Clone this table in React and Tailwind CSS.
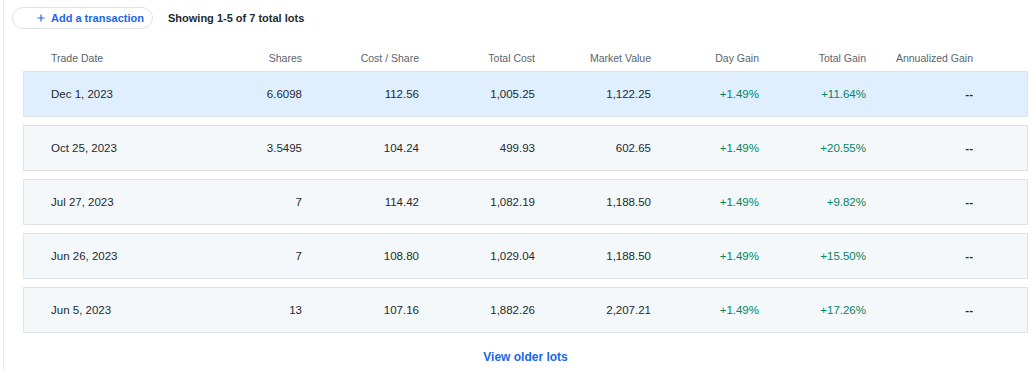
const lots = [
  { date: "Dec 1, 2023", shares: "6.6098", cost: "112.56", total: "1,005.25", value: "1,122.25", day: "+1.49%", gain: "+11.64%", annual: "--", active: true },
  { date: "Oct 25, 2023", shares: "3.5495", cost: "104.24", total: "499.93", value: "602.65", day: "+1.49%", gain: "+20.55%", annual: "--" },
  { date: "Jul 27, 2023", shares: "7", cost: "114.42", total: "1,082.19", value: "1,188.50", day: "+1.49%", gain: "+9.82%", annual: "--" },
  { date: "Jun 26, 2023", shares: "7", cost: "108.80", total: "1,029.04", value: "1,188.50", day: "+1.49%", gain: "+15.50%", annual: "--" },
  { date: "Jun 5, 2023", shares: "13", cost: "107.16", total: "1,882.26", value: "2,207.21", day: "+1.49%", gain: "+17.26%", annual: "--" },
];

const cols = "grid grid-cols-[150px_101px_117px_116px_116px_108px_107px_107px] items-center";

const App = () => {
  return (
    <div className="w-[1032px] h-[371px] bg-white pl-[3px] font-['Liberation_Sans',Arial,sans-serif] overflow-hidden">
      <div className="h-full border-l border-[#e6e9ed] pl-[8px] pr-[4px]">
        <div className="flex items-center pt-[7px]">
          <button className="flex items-center h-[22px] w-[141px] rounded-full border border-[#dfe3e8] pl-[24px] text-[11px] font-bold text-[#1a66e6]">
            <svg width="8" height="8" viewBox="0 0 10 10" className="mr-[6px]">
              <path d="M5 0.5v9M0.5 5h9" stroke="#1a66e6" strokeWidth="1.4" />
            </svg>
            Add a transaction
          </button>
          <span className="ml-[15px] text-[11px] font-bold text-[#232a31]">
            Showing 1-5 of 7 total lots
          </span>
        </div>

        <div className="pl-[11px]">
          <div className={`${cols} h-[24px] mt-[18px] pl-[28px] text-[10.5px] text-[#5b636a]`}>
            <div>Trade Date</div>
            <div className="text-right">Shares</div>
            <div className="text-right">Cost / Share</div>
            <div className="text-right">Total Cost</div>
            <div className="text-right">Market Value</div>
            <div className="text-right">Day Gain</div>
            <div className="text-right">Total Gain</div>
            <div className="text-right">Annualized Gain</div>
          </div>

          <div className="flex flex-col gap-[8px]">
            {lots.map((lot) => (
              <div
                key={lot.date}
                className={`${cols} h-[46px] pl-[27px] pt-[1px] border border-[#e0e4e9] text-[11.5px] text-[#232a31] ${
                  lot.active ? "bg-[#e0efff]" : "bg-[#f5f8fa]"
                }`}
              >
                <div>{lot.date}</div>
                <div className="text-right">{lot.shares}</div>
                <div className="text-right">{lot.cost}</div>
                <div className="text-right">{lot.total}</div>
                <div className="text-right">{lot.value}</div>
                <div className="text-right text-[#008561]">{lot.day}</div>
                <div className="text-right text-[#008561]">{lot.gain}</div>
                <div className="text-right font-bold">{lot.annual}</div>
              </div>
            ))}
          </div>

          <div className="flex justify-center pt-[15px]">
            <button className="text-[12px] font-bold text-[#1a66e6]">View older lots</button>
          </div>
        </div>
      </div>
    </div>
  );
};

export default App;
